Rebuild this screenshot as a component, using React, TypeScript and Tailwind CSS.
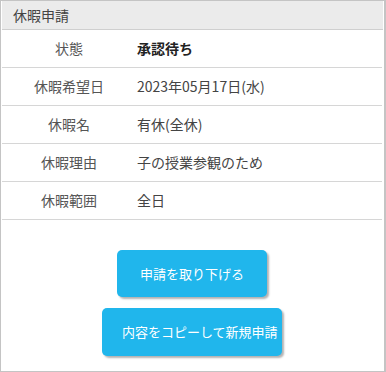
import React from "react";

const rows: { label: string; value: string; bold?: boolean }[] = [
  { label: "状態", value: "承認待ち", bold: true },
  { label: "休暇希望日", value: "2023年05月17日(水)" },
  { label: "休暇名", value: "有休(全休)" },
  { label: "休暇理由", value: "子の授業参観のため" },
  { label: "休暇範囲", value: "全日" },
];

export default function App() {
  return (
    <div
      className="w-[386px] h-[372px] bg-white"
      style={{ fontFamily: '"Noto Sans CJK JP", "Noto Sans", sans-serif' }}
    >
      <div className="w-[386px] h-[372px] border border-[#c4c4c4] border-r-2 flex flex-col">
        <div className="mx-[1px] h-[29px] bg-[#ebebeb] border-b border-[#cfcfcf] flex items-center pl-[11px] text-[14px] text-[#444]">
          休暇申請
        </div>
        <div className="mx-[1px] mr-[2px] flex flex-col">
          {rows.map((r) => (
            <div
              key={r.label}
              className="h-[38px] border-b border-[#d6d6d6] flex items-center text-[14px]"
            >
              <div className="w-[134px] text-center text-[#555]">{r.label}</div>
              <div
                className={
                  r.bold
                    ? "pl-[1px] text-[#222] font-semibold"
                    : "pl-[1px] text-[#444]"
                }
              >
                {r.value}
              </div>
            </div>
          ))}
        </div>
        <div className="flex flex-col items-center gap-[11px] pt-[30px] pr-[1px]">
          <button className="w-[150px] h-[47px] rounded-[5px] bg-[#20b6ec] text-white text-[13px] shadow-[2px_2px_2px_rgba(0,0,0,0.3)]">
            申請を取り下げる
          </button>
          <button className="w-[180px] h-[48px] rounded-[5px] bg-[#20b6ec] text-white text-[13px] text-left pl-[20px] whitespace-nowrap overflow-visible shadow-[2px_2px_2px_rgba(0,0,0,0.3)]">
            内容をコピーして新規申請
          </button>
        </div>
      </div>
    </div>
  );
}
